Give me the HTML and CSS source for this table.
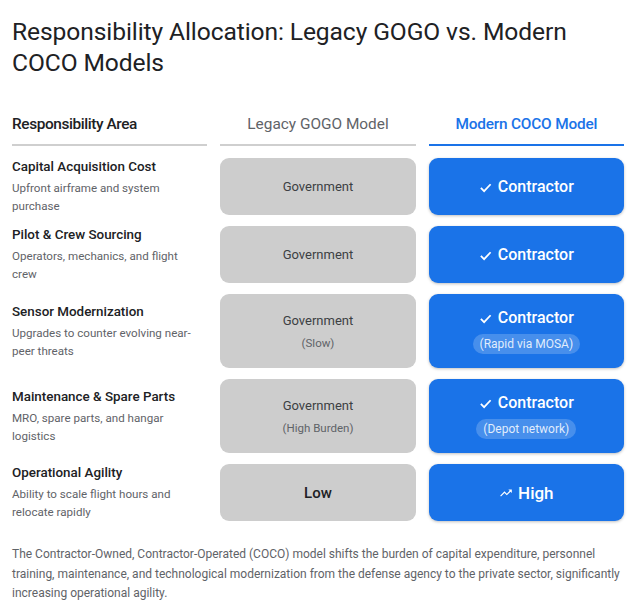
FILE: index.html
```html
<!DOCTYPE html>
<html>
<head>
<meta charset="utf-8">
<link rel="stylesheet" href="styles.css">
</head>
<body>
<div class="page">
  <h1 class="title">Responsibility Allocation: Legacy GOGO vs. Modern COCO Models</h1>
  <div class="table">
    <div class="head head-area">Responsibility Area</div>
    <div class="head head-gogo">Legacy GOGO Model</div>
    <div class="head head-coco">Modern COCO Model</div>

    <div class="area"><div class="area-name">Capital Acquisition Cost</div><div class="area-desc">Upfront airframe and system purchase</div></div>
    <div class="cell gov"><div class="main">Government</div></div>
    <div class="cell con"><div class="main"><svg class="check" viewBox="0 0 14 14"><path d="M2 7.5l3.5 3.5L12.5 3.5" fill="none" stroke="#fff" stroke-width="1.9"/></svg>Contractor</div></div>

    <div class="area"><div class="area-name">Pilot &amp; Crew Sourcing</div><div class="area-desc">Operators, mechanics, and flight crew</div></div>
    <div class="cell gov"><div class="main">Government</div></div>
    <div class="cell con"><div class="main"><svg class="check" viewBox="0 0 14 14"><path d="M2 7.5l3.5 3.5L12.5 3.5" fill="none" stroke="#fff" stroke-width="1.9"/></svg>Contractor</div></div>

    <div class="area"><div class="area-name">Sensor Modernization</div><div class="area-desc">Upgrades to counter evolving near-peer threats</div></div>
    <div class="cell gov"><div class="main">Government</div><div class="sub">(Slow)</div></div>
    <div class="cell con"><div class="main"><svg class="check" viewBox="0 0 14 14"><path d="M2 7.5l3.5 3.5L12.5 3.5" fill="none" stroke="#fff" stroke-width="1.9"/></svg>Contractor</div><div class="pill">(Rapid via MOSA)</div></div>

    <div class="area"><div class="area-name">Maintenance &amp; Spare Parts</div><div class="area-desc">MRO, spare parts, and hangar logistics</div></div>
    <div class="cell gov"><div class="main">Government</div><div class="sub">(High Burden)</div></div>
    <div class="cell con"><div class="main"><svg class="check" viewBox="0 0 14 14"><path d="M2 7.5l3.5 3.5L12.5 3.5" fill="none" stroke="#fff" stroke-width="1.9"/></svg>Contractor</div><div class="pill">(Depot network)</div></div>

    <div class="area"><div class="area-name">Operational Agility</div><div class="area-desc">Ability to scale flight hours and relocate rapidly</div></div>
    <div class="cell gov"><div class="main strong">Low</div></div>
    <div class="cell con"><div class="main big"><svg class="trend" viewBox="0 0 24 24"><path d="M16 6l2.29 2.29-4.88 4.88-4-4L2 16.59 3.41 18l6-6 4 4 6.3-6.29L22 12V6z" fill="#fff"/></svg>High</div></div>
  </div>
  <p class="note">The Contractor-Owned, Contractor-Operated (COCO) model shifts the burden of capital expenditure, personnel training, maintenance, and technological modernization from the defense agency to the private sector, significantly increasing operational agility.</p>
</div>
</body>
</html>
```
FILE: styles.css
```css
* { box-sizing: border-box; }
html, body { margin: 0; padding: 0; background: #fff; }
body { font-family: Roboto, "Noto Sans", sans-serif; color: #202124; }
.page { padding: 16px 13px 0 12px; }
.title {
  margin: 0;
  font-weight: 400;
  font-size: 24.6px;
  line-height: 31px;
  color: #202124;
  letter-spacing: -0.1px;
}
.table {
  margin-top: 36px;
  display: grid;
  grid-template-columns: 1fr 1fr 1fr;
  column-gap: 13px;
  row-gap: 11px;
}
.head {
  font-size: 15.4px;
  line-height: 20px;
  padding-bottom: 10px;
  border-bottom: 2px solid #cfcfcf;
  margin-bottom: 1px;
}
.head-area { font-weight: 500; color: #202124; letter-spacing: -0.4px; }
.head-gogo { text-align: center; color: #5f6368; }
.head-coco { text-align: center; color: #1a73e8; border-bottom-color: #1a73e8; font-weight: 500; letter-spacing: -0.2px; }
.area {
  display: flex;
  flex-direction: column;
  justify-content: center;
}
.area-name { font-size: 13.4px; line-height: 18px; font-weight: 500; color: #202124; }
.area-desc { font-size: 11.6px; line-height: 18px; color: #5f6368; margin-top: 3px; padding-right: 4px; }
.cell {
  border-radius: 9px;
  display: flex;
  flex-direction: column;
  align-items: center;
  justify-content: center;
  min-height: 56px;
  padding: 14px 8px;
}
.gov { background: #cdcdcd; color: #3c4043; }
.gov .main { font-size: 13px; line-height: 18px; }
.gov .sub { font-size: 11.5px; line-height: 16px; margin-top: 5px; color: #5f6368; }
.gov .main.strong { font-size: 15px; font-weight: 500; color: #202124; }
.con {
  background: #1a73e8;
  color: #fff;
  box-shadow: 0 1px 3px rgba(0,0,0,0.25);
}
.con .main { font-size: 16px; line-height: 20px; font-weight: 500; display: flex; align-items: center; }
.check { width: 13px; height: 13px; margin-right: 6px; margin-top: 1px; }
.con .main.big { font-size: 17px; }
.trend { width: 14px; height: 14px; margin-right: 5px; }
.pill {
  margin-top: 6px;
  font-size: 12px;
  line-height: 20px;
  padding: 0 7px;
  border-radius: 10px;
  background: rgba(255,255,255,0.2);
  color: rgba(255,255,255,0.85);
}
.note {
  margin: 24px 0 0 0;
  font-size: 12px;
  line-height: 19.5px;
  color: #5f6368;
}
```
